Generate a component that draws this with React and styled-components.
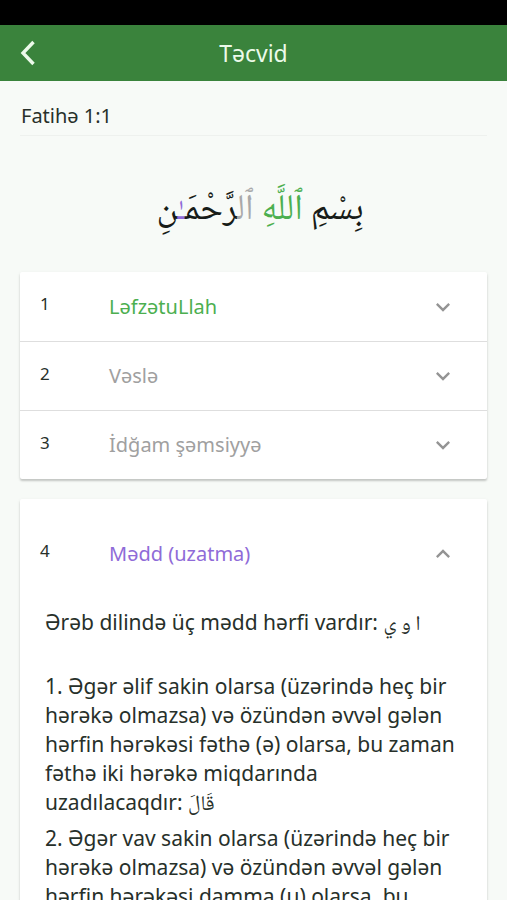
import React, { useState } from 'react';
import styled, { createGlobalStyle } from 'styled-components';

const Global = createGlobalStyle`
  *, *::before, *::after { box-sizing: border-box; }
  body {
    margin: 0;
    background: #f7faf7;
    color: #27302a;
    font-family: "Noto Sans", "Open Sans", sans-serif;
  }
`;

const Screen = styled.div`
  display: flex;
  flex-direction: column;
  height: 100vh;
`;

const StatusBar = styled.div`
  flex: none;
  height: 25px;
  background: #000;
`;

const AppBar = styled.header`
  flex: none;
  display: grid;
  grid-template-columns: 56px 1fr 56px;
  align-items: center;
  height: 56px;
  background: #3a833c;
  color: #ecfaea;
`;

const BackButton = styled.button`
  display: flex;
  align-items: center;
  justify-content: center;
  height: 56px;
  padding: 0;
  border: 0;
  background: none;
  color: inherit;
  cursor: pointer;
`;

const Title = styled.h1`
  margin: 0;
  font-size: 23px;
  line-height: 32px;
  font-weight: 400;
  text-align: center;
`;

const Content = styled.main`
  flex: 1;
  min-height: 0;
  overflow-y: auto;
  scrollbar-width: none;
  padding: 21px 20px 0;
`;

const VerseLabel = styled.h2`
  margin: 0;
  padding: 0 1px 5px;
  border-bottom: 1px solid #eef1ee;
  font-size: 20px;
  line-height: 28px;
  font-weight: 400;
`;

const Verse = styled.p`
  margin: 0;
  padding: 44px 0 28px 13px;
  color: #171c18;
  font-family: "Noto Naskh Arabic", "DejaVu Sans", serif;
  font-size: 36px;
  line-height: 64px;
  text-align: center;
`;

const Tone = styled.span`
  color: ${({ $color }) => $color};
`;

const Card = styled.section`
  margin-bottom: 20px;
  background: #fff;
  border-radius: 2px;
  box-shadow: 0 2px 2px rgba(0, 0, 0, 0.18), 0 1px 4px rgba(0, 0, 0, 0.06);
`;

const RuleHeader = styled.button`
  display: grid;
  grid-template-columns: 69px 1fr 28px;
  align-items: center;
  width: 100%;
  height: ${({ $open }) => ($open ? 109 : 69)}px;
  padding: 0 30px 0 20px;
  border: 0;
  background: none;
  font: inherit;
  color: inherit;
  text-align: left;
  cursor: pointer;

  & + & { border-top: 1px solid #dedede; }
`;

const RuleNumber = styled.span`
  padding-bottom: 5px;
  font-size: 17px;
  line-height: 24px;
`;

const RuleName = styled.span`
  font-size: 20px;
  line-height: 28px;
  color: ${({ $color }) => $color};
`;

const Explanation = styled.div`
  padding: 0 20px 20px 25px;
  font-size: 21px;
  line-height: 29px;
`;

const Paragraph = styled.p`
  margin: 0 0 7px;

  &:first-child { margin-bottom: 35px; }
`;

const Together = styled.span`
  white-space: nowrap;
`;

const Arabic = styled.span`
  font-family: "Noto Naskh Arabic", "DejaVu Sans", serif;
  line-height: 1;
`;

const Chevron = ({ up }) => (
  <svg width="28" height="28" viewBox="0 0 24 24" fill="#949494" aria-hidden="true">
    <path
      d={
        up
          ? 'M12 8l-6 6 1.41 1.41L12 10.83l4.59 4.58L18 14z'
          : 'M16.59 8.59L12 13.17 7.41 8.59 6 10l6 6 6-6z'
      }
    />
  </svg>
);

const Rule = ({ number, name, color, children }) => {
  const [open, setOpen] = useState(Boolean(children));
  return (
    <>
      <RuleHeader
        type="button"
        $open={open && Boolean(children)}
        aria-expanded={open}
        onClick={() => setOpen(!open)}
      >
        <RuleNumber>{number}</RuleNumber>
        <RuleName $color={color}>{name}</RuleName>
        <Chevron up={open} />
      </RuleHeader>
      {open && children && <Explanation>{children}</Explanation>}
    </>
  );
};

export default function App() {
  return (
    <Screen>
      <Global />
      <StatusBar />
      <AppBar>
        <BackButton type="button" aria-label="Geri">
          <svg width="24" height="28" viewBox="0 0 24 28" fill="none" stroke="currentColor" strokeWidth="3.4" aria-hidden="true">
            <path d="M17.5 3L7 14l10.500 11" />
          </svg>
        </BackButton>
        <Title>Təcvid</Title>
      </AppBar>
      <Content>
        <VerseLabel>Fatihə 1:1</VerseLabel>
        <Verse lang="ar" dir="rtl">
          بِسْمِ <Tone $color="#4caf50">ٱللَّهِ</Tone> <Tone $color="#a9a9a9">ٱل</Tone>رَّحْمَ<Tone $color="#8f6bd8">ـٰ</Tone>نِ
        </Verse>
        <Card>
          <Rule number="1" name="LəfzətuLlah" color="#4caf50" />
          <Rule number="2" name="Vəslə" color="#a0a0a0" />
          <Rule number="3" name="İdğam şəmsiyyə" color="#a0a0a0" />
        </Card>
        <Card>
          <Rule number="4" name="Mədd (uzatma)" color="#8f6bd8">
            <Paragraph>
              Ərəb dilində üç mədd hərfi vardır: <Arabic lang="ar" dir="rtl">ا و ي</Arabic>
            </Paragraph>
            <Paragraph>
              1. Əgər əlif sakin olarsa (üzərində heç bir hərəkə olmazsa) və özündən əvvəl gələn hərfin
              hərəkəsi fəthə (ə) olarsa, bu zaman fəthə iki hərəkə miqdarında{' '}
              <Together>
                uzadılacaqdır: <Arabic lang="ar" dir="rtl">قَالَ</Arabic>
              </Together>
            </Paragraph>
            <Paragraph>
              2. Əgər vav sakin olarsa (üzərində heç bir hərəkə olmazsa) və özündən əvvəl gələn hərfin
              hərəkəsi damma (u) olarsa, bu
            </Paragraph>
          </Rule>
        </Card>
      </Content>
    </Screen>
  );
}
